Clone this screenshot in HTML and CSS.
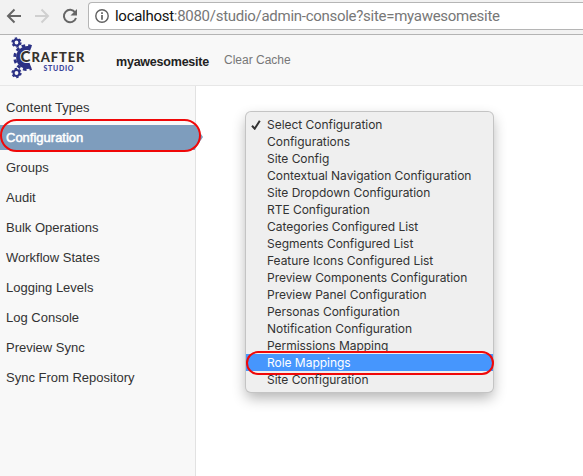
FILE: index.html
```html
<!DOCTYPE html>
<html lang="en">
<head>
<meta charset="utf-8">
<title>Crafter Studio</title>
<link rel="stylesheet" href="styles.css">
</head>
<body>
<div class="toolbar">
  <svg class="nav-icons" width="88" height="34" viewBox="0 0 88 34" fill="none" stroke-width="2">
    <path d="M21 16H8.500M14.500 9.500L8 16l6.500 6.500" stroke="#666"/>
    <path d="M35 16h12.500M41.500 9.500L48 16l-6.500 6.500" stroke="#d0d0d0"/>
    <path d="M75.200 12.500A6.200 6.200 0 1 0 76 18" stroke="#666"/>
    <path d="M77 9v6.500h-6.500z" fill="#666"/>
  </svg>
  <div class="address">
    <svg class="info" width="14" height="14" viewBox="0 0 14 14" fill="none" stroke="#606060">
      <circle cx="7" cy="7" r="6.200" stroke-width="1.400"/>
      <path d="M7 3.300v1.600M7 6v4.700" stroke-width="1.700"/>
    </svg>
    <span class="url"><span class="host">localhost</span>:8080/studio/admin-console?site=myawesomesite</span>
  </div>
</div>
<header class="header">
  <svg class="logo" width="80" height="44" viewBox="0 0 80 44">
    <g fill="none" stroke="#2b3185">
      <circle cx="8.500" cy="6.500" r="2.900" stroke-width="2"/>
      <circle cx="8.500" cy="6.500" r="4.400" stroke-width="1.500" stroke-dasharray="2.400 2.200"/>
      <circle cx="8.500" cy="37" r="2.900" stroke-width="2"/>
      <circle cx="8.500" cy="37" r="4.400" stroke-width="1.500" stroke-dasharray="2.400 2.200"/>
      <path d="M22.500 13.500A8.500 8.500 0 1 0 22.500 29.500" stroke-width="6"/>
      <path d="M23.500 10.500A12 12 0 1 0 23.500 32.500" stroke-width="2.800" stroke-dasharray="3.600 2.800"/>
    </g>
    <text class="logo-c" x="12.600" y="26.300">C</text>
    <text class="logo-name" x="23.500" y="26" textLength="53">RAFTER</text>
    <text class="logo-sub" x="35.500" y="35.200" textLength="30">STUDIO</text>
  </svg>
  <span class="site">myawesomesite</span>
  <span class="cache">Clear Cache</span>
</header>
<main class="main">
  <nav class="sidebar">
    <a>Content Types</a>
    <a class="active">Configuration</a>
    <a>Groups</a>
    <a>Audit</a>
    <a>Bulk Operations</a>
    <a>Workflow States</a>
    <a>Logging Levels</a>
    <a>Log Console</a>
    <a>Preview Sync</a>
    <a>Sync From Repository</a>
  </nav>
  <section class="content">
    <ul class="menu">
      <li><svg class="check" width="10" height="10" viewBox="0 0 10 10" fill="none" stroke="#333" stroke-width="2"><path d="M1 5.800L3.700 8.700 8.800 .8"/></svg>Select Configuration</li>
      <li>Configurations</li>
      <li>Site Config</li>
      <li>Contextual Navigation Configuration</li>
      <li>Site Dropdown Configuration</li>
      <li>RTE Configuration</li>
      <li>Categories Configured List</li>
      <li>Segments Configured List</li>
      <li>Feature Icons Configured List</li>
      <li>Preview Components Configuration</li>
      <li>Preview Panel Configuration</li>
      <li>Personas Configuration</li>
      <li>Notification Configuration</li>
      <li>Permissions Mapping</li>
      <li class="selected">Role Mappings</li>
      <li>Site Configuration</li>
    </ul>
  </section>
</main>
</body>
</html>
```
FILE: styles.css
```css
*, *::before, *::after { box-sizing: border-box; }
body { margin: 0; height: 476px; overflow: hidden; background: #fff; color: #333; font-family: "Liberation Sans", Arial, sans-serif; }
.toolbar { display: flex; height: 35px; background: #f2f2f2; border-bottom: 1px solid #b4b4b4; }
.nav-icons { flex: none; }
.address { display: flex; align-items: center; flex: 1; height: 28px; margin-top: 2px; padding-left: 6px; background: #fff; border: 1px solid #b5b5b5; border-right: 0; border-radius: 4px 0 0 4px; }
.info { flex: none; margin-right: 6px; }
.url { font: 15px/26px Roboto, sans-serif; letter-spacing: -.28px; color: #777; white-space: nowrap; }
.host { color: #111; }
.header { display: flex; height: 51px; background: #f8f8f8; border-bottom: 1px solid #e7e7e7; }
.logo { flex: none; margin: 1px 0 0 8px; overflow: visible; }
.logo text { font-family: Lato, sans-serif; font-weight: 900; fill: #35322d; }
.logo .logo-c { font-size: 15px; stroke: #f8f8f8; stroke-width: 1.8px; paint-order: stroke; }
.logo .logo-name { font-size: 13px; }
.logo .logo-sub { font-size: 7px; fill: #39439a; }
.site { width: 94px; margin: 18px 0 0 28px; font-size: 12.5px; line-height: 18px; font-weight: bold; letter-spacing: -.22px; color: #222; white-space: nowrap; }
.cache { margin: 16px 0 0 14px; font-size: 12px; line-height: 18px; color: #777; white-space: nowrap; }
.main { display: flex; height: 390px; }
.sidebar { display: flex; flex-direction: column; gap: 5px; width: 196px; padding-top: 9px; background: #f8f8f8; border-right: 1px solid #e2e2e2; }
.sidebar a { position: relative; height: 25px; padding-left: 6px; font-size: 13px; line-height: 25px; color: #333; white-space: nowrap; }
.sidebar .active { background: #7e9dbd; color: #fff; -webkit-text-stroke: .5px #fff; }
.active::before { content: ""; position: absolute; left: 195px; top: 0; border: solid transparent; border-width: 12.5px 0 12.5px 8px; border-left-color: #7e9dbd; }
.active::after { content: ""; position: absolute; left: 0; top: -6px; width: 201px; height: 33px; border: 2px solid #f00808; border-radius: 17px; }
.content { padding: 26px 0 0 50px; }
.menu { width: 247px; height: 280px; margin: 0; padding: 4px 0; list-style: none; background: #efefef; border-radius: 5px; box-shadow: 0 0 0 1px #c4c4c4, 0 6px 14px rgba(0,0,0,.3); font: 12px/18px Inter, sans-serif; letter-spacing: -.03px; }
.menu li { position: relative; height: 17px; padding-left: 21px; white-space: nowrap; }
.check { position: absolute; left: 5px; top: 4px; }
.menu .selected { background: #4696fd; color: #fff; }
.selected::after { content: ""; position: absolute; left: 0; top: -3px; width: 248px; height: 24px; border: 2px solid #f00808; border-radius: 12px; }
```
